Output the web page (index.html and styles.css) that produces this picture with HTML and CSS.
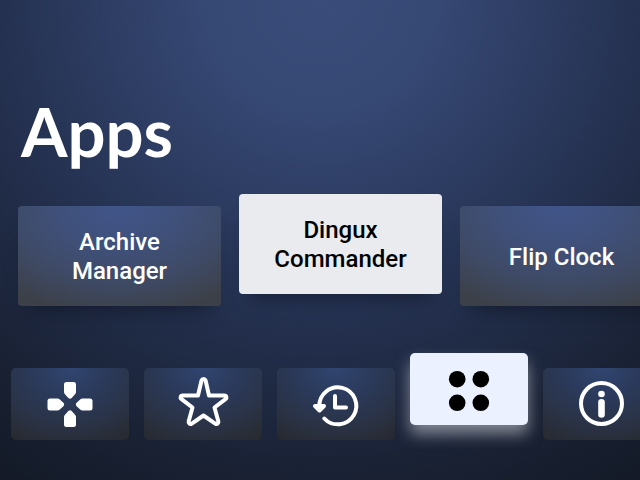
FILE: index.html
```html
<!DOCTYPE html>
<html lang="en">
<head>
<meta charset="utf-8">
<meta name="viewport" content="width=device-width, initial-scale=1">
<title>Apps</title>
<link rel="stylesheet" href="styles.css">
</head>
<body>
<main class="launcher">
  <h1 class="title">Apps</h1>
  <section class="apps" aria-label="Apps">
    <button class="app" type="button">Archive Manager</button>
    <button class="app app-selected" type="button">Dingux Commander</button>
    <button class="app" type="button">Flip Clock</button>
  </section>
  <nav class="tabs" aria-label="Sections">
    <button class="tab" type="button" aria-label="Games">
      <svg class="icon" viewBox="0 0 54 54" fill="#fff">
        <path id="pad" d="M23.500 5h7a2.500 2.500 0 0 1 2.500 2.500V15c0 1-.4 1.700-1 2.300l-3.300 3.600c-1 1-2.400 1-3.400 0L22 17.300c-.6-.6-1-1.300-1-2.300V7.500A2.500 2.500 0 0 1 23.500 5z"/>
        <use href="#pad" transform="rotate(90 27 27.500)"/>
        <use href="#pad" transform="rotate(180 27 27.500)"/>
        <use href="#pad" transform="rotate(270 27 27.500)"/>
      </svg>
    </button>
    <button class="tab" type="button" aria-label="Favorites">
      <svg class="icon" viewBox="0 0 54 54" fill="none" stroke="#fff" stroke-width="4" stroke-linejoin="round">
        <path d="M25.500 3.500c.8-2 3.300-2 4.100 0L33 18.500H48.300c2.200 0 2.900 2.300 1.200 3.600L38.500 30.500 42.300 44.300c.6 2.200-1.300 3.500-3.100 2.300L27.500 38.500 15.800 46.600c-1.800 1.200-3.700-.1-3.100-2.300L16.500 30.500 5.500 22.100C3.800 20.800 4.500 18.500 6.700 18.500H22z"/>
      </svg>
    </button>
    <button class="tab" type="button" aria-label="Recent">
      <svg class="icon" viewBox="0 0 54 54" fill="none" stroke="#fff" stroke-width="4" stroke-linecap="round" stroke-linejoin="round">
        <path d="M10.300 29.500A18.500 18.500 0 1 1 15.300 41.500M26 19V30.500H37"/>
        <path d="M6 29H15L10.500 33.500z" fill="#fff"/>
      </svg>
    </button>
    <button class="tab tab-selected" type="button" aria-label="Apps" aria-current="page">
      <svg class="icon" viewBox="0 0 54 54">
        <circle cx="15.200" cy="17.200" r="8.300"/>
        <circle cx="38.800" cy="17.200" r="8.300"/>
        <circle cx="15.200" cy="40.800" r="8.300"/>
        <circle cx="38.800" cy="40.800" r="8.300"/>
      </svg>
    </button>
    <button class="tab" type="button" aria-label="About">
      <svg class="icon" viewBox="0 0 54 54" fill="none" stroke="#fff" stroke-width="4">
        <circle cx="26.500" cy="26.500" r="20.500"/>
        <circle cx="26.500" cy="17" r="3.300" fill="#fff" stroke="none"/>
        <path d="M26.500 25.200V37.500" stroke-width="6.600" stroke-linecap="round"/>
      </svg>
    </button>
  </nav>
</main>
</body>
</html>
```
FILE: styles.css
```css
* {
  box-sizing: border-box;
}

body {
  margin: 0;
  min-height: 100vh;
  overflow: hidden;
  font-family: Roboto, "Liberation Sans", sans-serif;
  color: #fff;
  background:
    radial-gradient(ellipse 80% 105% at 50% 0, #3a4d7a 0%, #364874 22%, #2c3b60 45%, #222e4b 68%, #192133 95%, #10151f 125%);
}

.launcher {
  display: flex;
  flex-direction: column;
  min-height: 100vh;
  padding: 92px 0 40px;
}

.title {
  margin: 0;
  padding-left: 21px;
  font-family: Lato, sans-serif;
  font-size: 67px;
  font-weight: 700;
  line-height: 78px;
}

.apps {
  display: flex;
  gap: 18px;
  margin-top: 36px;
  padding-left: 18px;
}

.app {
  flex: 0 0 203px;
  height: 100px;
  padding: 2px 40px 0;
  border: 0;
  border-radius: 4px;
  font: 500 24px/29px Roboto, sans-serif;
  color: #fff;
  background: radial-gradient(ellipse 75% 100% at 50% 0, #41558a 0%, #3f507a 40%, #3e4a66 75%, #3c4048 110%);
  box-shadow: 0 14px 18px -12px rgba(10, 14, 24, 0.6);
}

.app-selected {
  margin: -12px 0 12px;
  padding: 2px 30px 0;
  color: #000;
  background: #e9ebee;
}

.tabs {
  display: flex;
  gap: 15px;
  margin-top: auto;
  padding-left: 11px;
}

.tab {
  display: flex;
  flex: 0 0 118px;
  align-items: center;
  justify-content: center;
  height: 72px;
  padding: 0;
  border: 0;
  border-radius: 5px;
  background: radial-gradient(ellipse 80% 105% at 50% 0, #304570 0%, #2b3a5b 40%, #2a3347 75%, #282a30 110%);
}

.tab-selected {
  margin: -15px 0 15px;
  background: #ebf1fe;
  box-shadow: 0 9px 15px rgba(235, 235, 240, 0.5);
}

.icon {
  width: 54px;
  height: 54px;
}
```
